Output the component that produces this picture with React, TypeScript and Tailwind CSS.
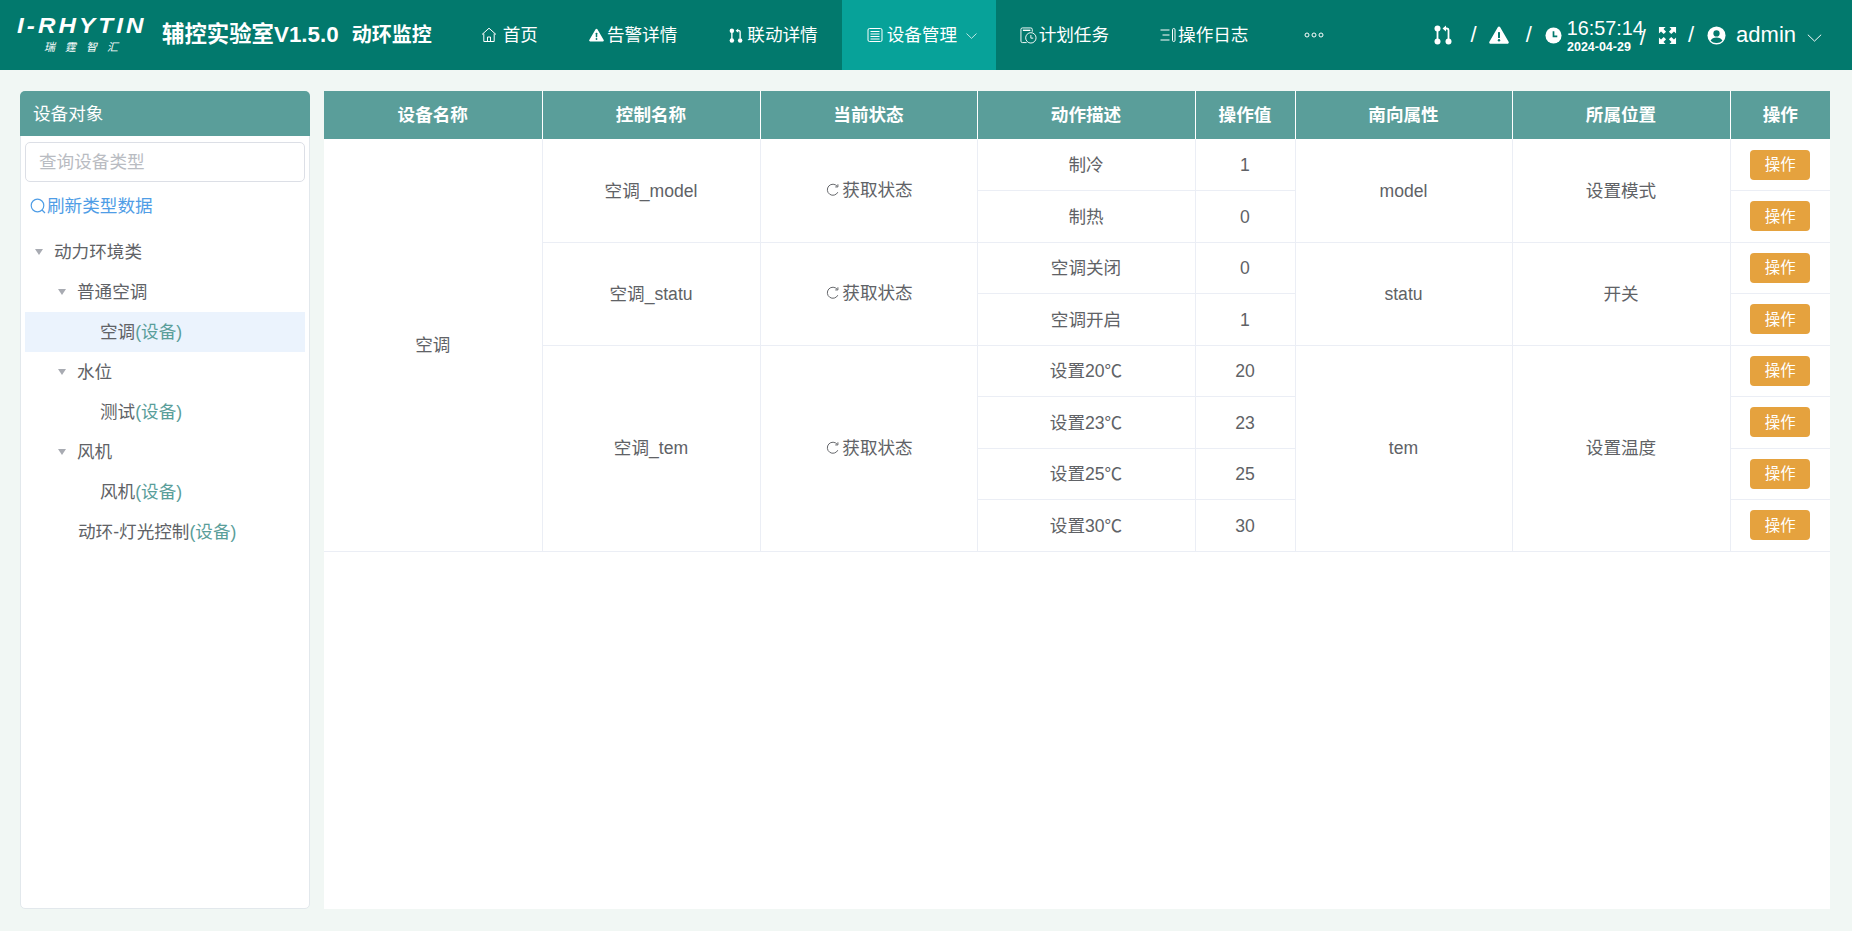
import React from 'react';

const FONT = '[font-family:"Liberation_Sans","Noto_Sans_CJK_SC",sans-serif]';

function PullIcon({ className }: { className?: string }) {
  return (
    <svg viewBox="0 0 18 20" className={className} fill="currentColor">
      <circle cx="3.5" cy="3.5" r="3" />
      <circle cx="3.5" cy="16.5" r="3" />
      <circle cx="14.5" cy="16.5" r="3" />
      <rect x="2.6" y="5" width="1.8" height="10" />
      <path d="M8.5 3.5 12 0.5v2h1a2.5 2.5 0 0 1 2.4 2.5v9h-1.8V5.2a.8.8 0 0 0-.8-.8h-.8v2z" />
    </svg>
  );
}

function WarnIcon({ className }: { className?: string }) {
  return (
    <svg viewBox="0 0 20 18" className={className}>
      <path d="M10 0.5c.5 0 .9.3 1.2.7l8.4 14.6c.5.9-.1 1.9-1.1 1.9H1.5c-1 0-1.6-1-1.1-1.9L8.8 1.2c.3-.4.7-.7 1.2-.7z" fill="currentColor" />
      <rect x="9" y="6" width="2" height="6" rx=".6" fill="#02796d" />
      <circle cx="10" cy="14.3" r="1.2" fill="#02796d" />
    </svg>
  );
}

function HomeIcon({ className }: { className?: string }) {
  return (
    <svg viewBox="0 0 16 16" className={className} fill="none" stroke="currentColor" strokeWidth="1">
      <path d="M1 7.5 8 1.2l7 6.3" />
      <path d="M2.8 6.5V14.5h10.4V6.5" />
      <path d="M6.5 14.5V10h3v4.5" />
    </svg>
  );
}

function TicketIcon({ className }: { className?: string }) {
  return (
    <svg viewBox="0 0 16 16" className={className} fill="none" stroke="currentColor" strokeWidth="1">
      <rect x="1" y="1.5" width="14" height="13" rx="1.5" />
      <path d="M3.5 4.5h9M3.5 7h9M3.5 9.5h9M3.5 12h9" />
    </svg>
  );
}

function ScheduleIcon({ className }: { className?: string }) {
  return (
    <svg viewBox="0 0 18 18" className={className} fill="none" stroke="currentColor" strokeWidth="1">
      <path d="M7 16.5H2.5a1.500 1.500 0 0 1-1.500-1.500V2.500A1.500 1.500 0 0 1 2.500 1h9A1.500 1.500 0 0 1 13 2.500V5" />
      <path d="M3 3.500h8" strokeWidth="1.500" />
      <circle cx="11.500" cy="11.500" r="5.500" />
      <path d="M11.500 8.500v3.300h2.500" />
    </svg>
  );
}

function LogIcon({ className }: { className?: string }) {
  return (
    <svg viewBox="0 0 16 16" className={className} fill="none" stroke="currentColor" strokeWidth="1">
      <path d="M0.500 3h9M2.500 8h7M0.500 13h9" />
      <rect x="12.500" y="1.500" width="2.500" height="13" rx="1.200" />
    </svg>
  );
}

function ClockIcon({ className }: { className?: string }) {
  return (
    <svg viewBox="0 0 18 18" className={className}>
      <circle cx="9" cy="9" r="8.500" fill="currentColor" />
      <path d="M9 4.500V10h4" fill="none" stroke="#02796d" strokeWidth="1.800" />
    </svg>
  );
}

function FullIcon({ className }: { className?: string }) {
  return (
    <svg viewBox="0 0 20 20" className={className} fill="currentColor">
      <path d="M1 1h7L5.800 3.200 8.500 6 6 8.500 3.200 5.800 1 8z" />
      <path d="M19 1h-7l2.200 2.200L11.500 6 14 8.500l2.800-2.700L19 8z" />
      <path d="M1 19h7l-2.200-2.200L8.500 14 6 11.500l-2.800 2.700L1 12z" />
      <path d="M19 19h-7l2.200-2.200L11.500 14l2.500-2.500 2.800 2.700L19 12z" />
    </svg>
  );
}

function UserIcon({ className }: { className?: string }) {
  return (
    <svg viewBox="0 0 20 20" className={className}>
      <circle cx="10" cy="10" r="9.500" fill="currentColor" />
      <circle cx="10" cy="7.800" r="3.300" fill="#02796d" />
      <path d="M3.800 15.500c1-2.500 3.500-3.500 6.200-3.500s5.200 1 6.200 3.500A8 8 0 0 1 10 18a8 8 0 0 1-6.200-2.500z" fill="#02796d" />
    </svg>
  );
}

function DotsIcon({ className }: { className?: string }) {
  return (
    <svg viewBox="0 0 20 6" className={className} fill="none" stroke="currentColor" strokeWidth="1">
      <circle cx="3" cy="3" r="2" />
      <circle cx="10" cy="3" r="2" />
      <circle cx="17" cy="3" r="2" />
    </svg>
  );
}

function RefreshIcon({ className }: { className?: string }) {
  return (
    <svg viewBox="0 0 16 16" className={className} fill="none" stroke="currentColor" strokeWidth="1.100">
      <path d="M13.500 10.500A6.300 6.300 0 1 1 12.800 3.800" />
      <path d="M13.600 1.500v3h-3" />
    </svg>
  );
}

function SearchIcon({ className }: { className?: string }) {
  return (
    <svg viewBox="0 0 16 16" className={className} fill="none" stroke="currentColor" strokeWidth="1.200">
      <circle cx="7.500" cy="7.500" r="6.300" />
      <path d="m12 12 3 3" />
    </svg>
  );
}

function Chevron({ className }: { className?: string }) {
  return (
    <svg viewBox="0 0 16 9" className={className} fill="none" stroke="currentColor" strokeWidth="1.100">
      <path d="M0.500 0.800 8 8l7.500-7.200" />
    </svg>
  );
}

function Slash({ className = '' }: { className?: string }) {
  return <span className={`text-[22px] leading-none ${className}`}>/</span>;
}

function Header() {
  return (
    <header className="flex h-[70px] shrink-0 items-center bg-[#02796d] text-white">
      <div className="ml-[17px] flex w-[129px] flex-col">
        <span className="origin-left whitespace-nowrap text-[22px] font-bold italic leading-[20px] tracking-[2.800px] [transform:scaleX(1.1)]">I-RHYTIN</span>
        <span className="ml-[27px] mt-[4px] whitespace-nowrap text-[11px] italic leading-[14px] tracking-[10px]">瑞霆智汇</span>
      </div>
      <span className="ml-[16px] whitespace-nowrap text-[22.400px] font-bold">辅控实验室V1.5.0</span>
      <span className="ml-[13px] whitespace-nowrap text-[20px] font-bold">动环监控</span>
      <nav className="ml-[25.500px] flex h-full items-center text-[17.6px]">
        <a className="flex h-full items-center pl-[24px] pr-[22px]"><HomeIcon className="mr-[5.500px] h-[16px] w-[16px]" />首页</a>
        <a className="ml-[7px] flex h-full items-center px-[22px]"><WarnIcon className="mr-[3px] h-[14px] w-[15px]" />告警详情</a>
        <a className="ml-[8px] flex h-full items-center px-[22px]"><PullIcon className="mr-[4px] h-[15px] w-[14px]" />联动详情</a>
        <a className="ml-[2px] flex h-full w-[154px] items-center bg-[#07a299] pl-[25px]">
          <TicketIcon className="mr-[4px] h-[16px] w-[16px]" />设备管理
          <Chevron className="ml-[9px] mt-[2px] h-[6px] w-[11px]" />
        </a>
        <a className="ml-[2px] flex h-full items-center px-[22px]"><ScheduleIcon className="mr-[2px] h-[17px] w-[17px]" />计划任务</a>
        <a className="ml-[7px] flex h-full items-center px-[22px]"><LogIcon className="mr-[2px] h-[16px] w-[16px]" />操作日志</a>
        <a className="ml-[34px] flex h-full items-center"><DotsIcon className="h-[6px] w-[20px]" /></a>
      </nav>
      <div className="ml-auto mr-[30px] flex items-center">
        <PullIcon className="h-[20px] w-[18px]" />
        <Slash className="ml-[19px]" />
        <WarnIcon className="ml-[12px] h-[18px] w-[20px]" />
        <Slash className="ml-[17px]" />
        <ClockIcon className="ml-[13px] h-[17px] w-[17px]" />
        <div className="ml-[5px] flex w-[76px] flex-col">
          <span className="text-[19.8px] leading-[22px]">16:57:14</span>
          <span className="mt-[1px] origin-left text-[13px] font-bold leading-[14px] [transform:scaleX(0.96)]">2024-04-29</span>
        </div>
        <Slash className="-ml-[3px] mt-[6px]" />
        <FullIcon className="ml-[12px] h-[19px] w-[19px]" />
        <Slash className="ml-[11px]" />
        <UserIcon className="ml-[13px] h-[19px] w-[19px]" />
        <span className="ml-[10px] text-[22px] leading-none">admin</span>
        <Chevron className="ml-[11px] mt-[5px] h-[8px] w-[15px]" />
      </div>
    </header>
  );
}

type TreeRow = { label: string; device?: boolean; pad: string; arrow?: boolean; active?: boolean };

const treeRows: TreeRow[] = [
  { label: '动力环境类', pad: 'pl-[10px]', arrow: true },
  { label: '普通空调', pad: 'pl-[33px]', arrow: true },
  { label: '空调', pad: 'pl-[75px]', device: true, active: true },
  { label: '水位', pad: 'pl-[33px]', arrow: true },
  { label: '测试', pad: 'pl-[75px]', device: true },
  { label: '风机', pad: 'pl-[33px]', arrow: true },
  { label: '风机', pad: 'pl-[75px]', device: true },
  { label: '动环-灯光控制', pad: 'pl-[53px]', device: true },
];

function Sidebar() {
  return (
    <aside className="flex w-[290px] shrink-0 flex-col rounded-[5px] border border-[#e2e8ec] bg-white">
      <div className="-mx-px -mt-px flex h-[45px] items-center rounded-t-[5px] bg-[#5a9e9a] pl-[13px] pt-[2px] text-[17.6px] text-white">设备对象</div>
      <div className="px-[4px] pt-[6px]">
        <div className="flex h-[40px] items-center rounded-[5px] border border-[#dcdfe6] pl-[13px] text-[17.6px] text-[#b9bcc2]">查询设备类型</div>
        <div className="mt-[12px] flex h-[24px] items-center pl-[5px] text-[17.6px] text-[#4f9de6]">
          <SearchIcon className="mr-[1px] h-[16px] w-[16px]" />刷新类型数据
        </div>
        <div className="mt-[14px] text-[17.6px] text-[#606266]">
          {treeRows.map((row, i) => (
            <div key={i} className={`flex h-[40px] items-center ${row.pad} ${row.active ? 'bg-[#ebf3fd]' : ''}`}>
              {row.arrow && (
                <span className="mr-[11px] h-0 w-0 border-x-[4.500px] border-t-[6px] border-x-transparent border-t-[#a8abb2]" />
              )}
              <span>{row.label}</span>
              {row.device && <span className="text-[#5a9e9a]">(设备)</span>}
            </div>
          ))}
        </div>
      </div>
    </aside>
  );
}

type Group = {
  name: string;
  prop: string;
  place: string;
  actions: [string, string][];
};

const groups: Group[] = [
  { name: '空调_model', prop: 'model', place: '设置模式', actions: [['制冷', '1'], ['制热', '0']] },
  { name: '空调_statu', prop: 'statu', place: '开关', actions: [['空调关闭', '0'], ['空调开启', '1']] },
  {
    name: '空调_tem',
    prop: 'tem',
    place: '设置温度',
    actions: [['设置20℃', '20'], ['设置23℃', '23'], ['设置25℃', '25'], ['设置30℃', '30']],
  },
];

const headers = ['设备名称', '控制名称', '当前状态', '动作描述', '操作值', '南向属性', '所属位置', '操作'];

const td = 'border-b border-r border-[#ebeef5] p-0 pt-[1px] text-center align-middle';

function DeviceTable() {
  return (
    <section className="min-w-0 flex-1 bg-white">
      <table className="w-full table-fixed border-collapse text-[17.6px] text-[#606266]">
        <colgroup>
          <col className="w-[218px]" />
          <col className="w-[218px]" />
          <col className="w-[217px]" />
          <col className="w-[218px]" />
          <col className="w-[100px]" />
          <col className="w-[217px]" />
          <col className="w-[218px]" />
          <col className="w-[100px]" />
        </colgroup>
        <thead>
          <tr className="h-[48px] bg-[#5a9e9a] text-white">
            {headers.map((h) => (
              <th key={h} className="border-r border-white p-0 text-center font-bold last:border-r-0">{h}</th>
            ))}
          </tr>
        </thead>
        <tbody>
          {groups.map((g, gi) =>
            g.actions.map(([desc, val], ai) => (
              <tr key={desc} className="h-[51.500px]">
                {gi === 0 && ai === 0 && <td rowSpan={8} className={td}>空调</td>}
                {ai === 0 && <td rowSpan={g.actions.length} className={td}>{g.name}</td>}
                {ai === 0 && (
                  <td rowSpan={g.actions.length} className={td}>
                    <span className="ml-[2px] inline-flex items-center">
                      <RefreshIcon className="mr-[2px] h-[14px] w-[14px]" />获取状态
                    </span>
                  </td>
                )}
                <td className={td}>{desc}</td>
                <td className={td}>{val}</td>
                {ai === 0 && <td rowSpan={g.actions.length} className={td}>{g.prop}</td>}
                {ai === 0 && <td rowSpan={g.actions.length} className={td}>{g.place}</td>}
                <td className="border-b border-[#ebeef5] p-0 text-center align-middle">
                  <button className="h-[30px] w-[60px] rounded-[4px] bg-[#e5a23e] text-[15.400px] text-white">操作</button>
                </td>
              </tr>
            )),
          )}
        </tbody>
      </table>
    </section>
  );
}

export default function App() {
  return (
    <div className={`flex h-[931px] flex-col overflow-hidden bg-[#f1f7f4] ${FONT}`}>
      <Header />
      <main className="flex min-h-0 flex-1 gap-[14px] pb-[22px] pl-[20px] pr-[22px] pt-[21px]">
        <Sidebar />
        <DeviceTable />
      </main>
    </div>
  );
}
